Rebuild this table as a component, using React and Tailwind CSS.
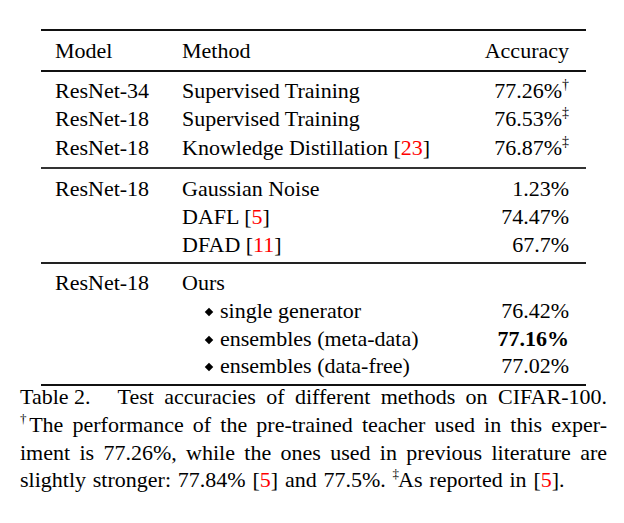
import React from "react";

const Cite = ({ n }) => (
  <>
    [<span className="text-[#ff0000]">{n}</span>]
  </>
);

const Sup = ({ c }) => (
  <sup className="text-[14px] top-[-9px] leading-none">{c}</sup>
);

const CapSup = ({ c }) => (
  <sup className="text-[13px] top-[-9px] leading-none mr-[-1px]">{c}</sup>
);

const Diamond = () => (
  <span className="inline-block w-[6px] h-[6px] bg-black rotate-45 relative top-[-3px] ml-[24px] mr-[8px]" />
);

function Row({ model, method, acc, h }) {
  return (
    <div className={`flex items-baseline ${h}`}>
      <div className="w-[141px] pl-[14px] shrink-0 whitespace-nowrap">{model}</div>
      <div className="flex-1 whitespace-nowrap">{method}</div>
      <div className="pr-[17px] text-right whitespace-nowrap">{acc}</div>
    </div>
  );
}

export default function App() {
  const g1 = "leading-[28.6px]";
  const g = "leading-[27.8px]";
  return (
    <div className="w-[624px] h-[523px] bg-white text-black font-['Liberation_Serif','Times_New_Roman',serif] text-[22px] overflow-hidden">
      <div className="pt-[29px] pl-[41px] w-[586px]">
        <div className="h-[2px] bg-[#111]" />
        <div className="mt-[6px]">
          <Row h="leading-[27.5px]" model="Model" method="Method" acc="Accuracy" />
        </div>
        <div className="mt-[5.5px] h-[1.5px] bg-[#111]" />
        <div className="mt-[5px]">
          <Row h={g1} model="ResNet-34" method="Supervised Training" acc={<>77.26%<Sup c="†" /></>} />
          <Row h={g1} model="ResNet-18" method="Supervised Training" acc={<>76.53%<Sup c="‡" /></>} />
          <Row h={g1} model="ResNet-18" method={<>Knowledge Distillation <Cite n="23" /></>} acc={<>76.87%<Sup c="‡" /></>} />
        </div>
        <div className="mt-[5px] h-[2px] bg-[#333]" />
        <div className="mt-[5.7px]">
          <Row h={g} model="ResNet-18" method="Gaussian Noise" acc="1.23%" />
          <Row h={g} model="" method={<>DAFL <Cite n="5" /></>} acc="74.47%" />
          <Row h={g} model="" method={<>DFAD <Cite n="11" /></>} acc="67.7%" />
        </div>
        <div className="mt-[4px] h-[2px] bg-[#222]" />
        <div className="mt-[4.7px]">
          <Row h={g} model="ResNet-18" method="Ours" acc="" />
          <Row h={g} model="" method={<><Diamond />single generator</>} acc="76.42%" />
          <Row h={g} model="" method={<><Diamond />ensembles (meta-data)</>} acc={<span className="font-bold">77.16%</span>} />
          <Row h={g} model="" method={<><Diamond />ensembles (data-free)</>} acc="77.02%" />
        </div>
        <div className="mt-[4px] h-[2px] bg-[#111]" />
      </div>
      <div className="ml-[20px] w-[587px] mt-[-3px] leading-[27.7px] text-justify">
        <div className="[text-align-last:justify]">
          <span className="inline-block mr-[27px]">Table 2.</span>Test accuracies of different methods on CIFAR-100.
        </div>
        <div className="[text-align-last:justify]">
          <CapSup c="†" />The performance of the pre-trained teacher used in this exper-
        </div>
        <div className="[text-align-last:justify]">
          iment is 77.26%, while the ones used in previous literature are
        </div>
        <div className="[text-align-last:left] [word-spacing:1.3px]">
          slightly stronger: 77.84% <Cite n="5" /> and 77.5%. <CapSup c="‡" />As reported in <Cite n="5" />.
        </div>
      </div>
    </div>
  );
}
